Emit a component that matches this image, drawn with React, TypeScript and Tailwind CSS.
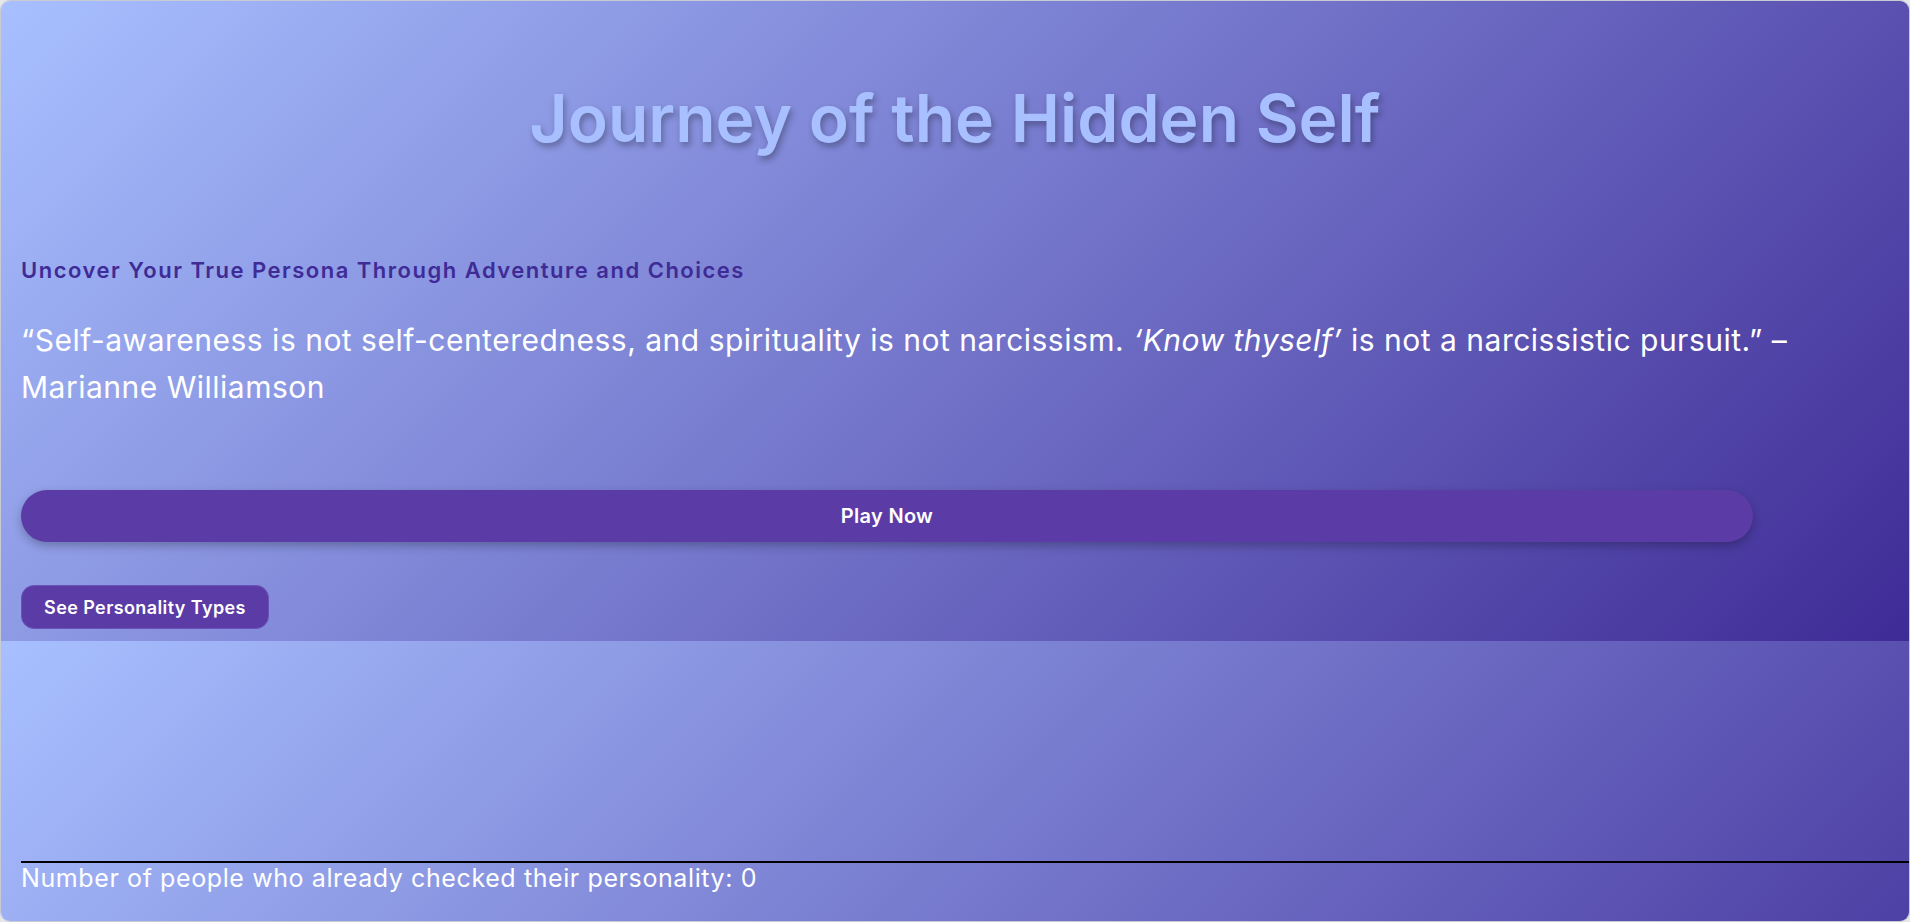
export default function App() {
  return (
    <div className="w-[1910px] h-[922px] bg-[#e5e7eb] font-['Inter',sans-serif]">
      <div className="h-full rounded-[10px] border border-[#c9cbd3] overflow-hidden flex flex-col">
        <section className="h-[640px] shrink-0 bg-[linear-gradient(135deg,#a8c0ff,#3f2b96)] px-5 flex flex-col items-start">
          <h1 className="self-stretch mt-[77px] text-center text-[66px] leading-[80px] font-semibold text-[#a8c0ff] [text-shadow:2px_4px_6px_rgba(0,0,0,0.3)]">
            Journey of the Hidden Self
          </h1>
          <h2 className="mt-[97px] text-[22px] leading-[30px] font-semibold tracking-[1.5px] text-[#3f2b96]">
            Uncover Your True Persona Through Adventure and Choices
          </h2>
          <p className="mt-[32px] text-[30px] leading-[47px] tracking-[0.5px] text-white">
            “Self-awareness is not self-centeredness, and spirituality is not narcissism.{" "}
            <em>‘Know thyself’</em> is not a narcissistic pursuit.” – Marianne Williamson
          </p>
          <button className="mt-[79px] w-[1732px] h-[52px] rounded-full bg-[#5b3ba6] text-white text-[20px] font-semibold tracking-[0.3px] shadow-[0_4px_10px_rgba(0,0,0,0.25)]">
            Play Now
          </button>
          <button className="mt-[43px] w-[248px] h-[44px] rounded-[13px] bg-[#5b3ba6] border border-[#6a52b8] text-white text-[18px] font-semibold tracking-[0.4px]">
            See Personality Types
          </button>
        </section>
        <section className="flex-1 bg-[linear-gradient(135deg,#a8c0ff,#3f2b96)] bg-[length:100%_640px] bg-no-repeat flex flex-col justify-end pl-5 pb-[28px]">
          <div className="w-full border-t-2 border-black" />
          <p className="text-[25px] leading-[30px] tracking-[0.6px] text-white">
            Number of people who already checked their personality: 0
          </p>
        </section>
      </div>
    </div>
  );
}
